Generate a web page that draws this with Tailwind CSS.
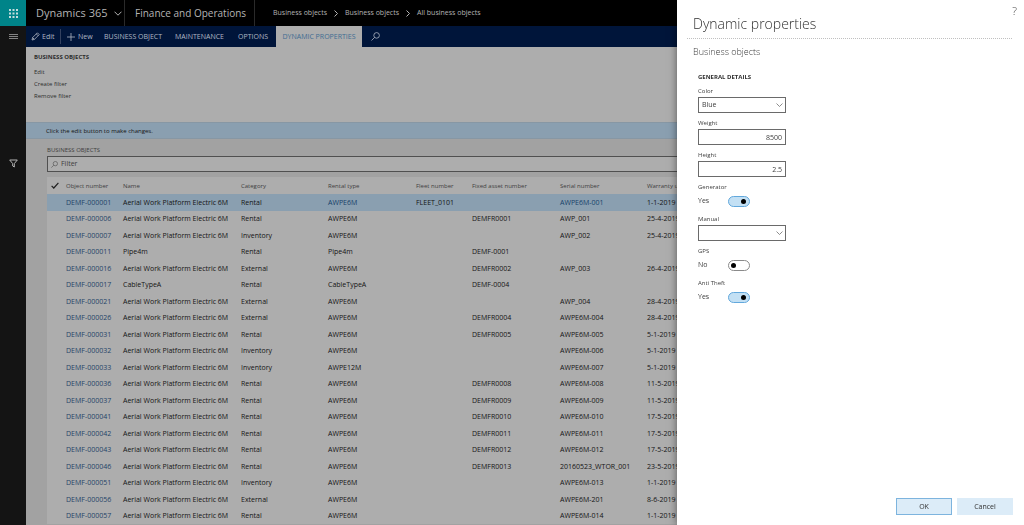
<!DOCTYPE html>
<html lang="en">
<head>
    <meta charset="UTF-8">
    <meta name="viewport" content="width=device-width, initial-scale=1.0">
    <title>All business objects - Finance and Operations</title>
    <script src="https://cdn.jsdelivr.net/npm/@tailwindcss/browser@4"></script>
</head>
<body class="h-screen overflow-hidden bg-[#a8a8a8] font-['Open_Sans','Noto_Sans',sans-serif] text-[7px] leading-[12px] text-[#141414]">
    <div class="flex h-full">
        <nav class="flex w-[26px] shrink-0 flex-col items-center bg-[#141414]">
            <button class="flex h-[26px] w-full items-center justify-center bg-[#008489]" aria-label="App launcher">
                <svg class="size-[9px] fill-[#c4dcdc]" viewBox="0 0 9 9">
                    <path d="M0 0h2v2H0zM3.5 0h2v2h-2zM7 0h2v2H7zM0 3.5h2v2H0zM3.5 3.5h2v2h-2zM7 3.5h2v2H7zM0 7h2v2H0zM3.5 7h2v2h-2zM7 7h2v2H7z"/>
                </svg>
            </button>
            <button class="flex h-[21px] w-full items-center justify-center" aria-label="Expand navigation">
                <svg class="h-[7px] w-[9px] stroke-[#a0a0a0]" viewBox="0 0 9 7"><path d="M0 1.5h9M0 3.5h9M0 5.5h9" stroke-width=".8"/></svg>
            </button>
            <button class="mt-[110px] flex h-3 w-full items-center justify-center" aria-label="Filter pane">
                <svg class="size-[9px] fill-none stroke-[#b4b4b4]" viewBox="0 0 9 9"><path d="M.7 1h7.6L5.3 4.6V8L3.7 7V4.6z"/></svg>
            </button>
        </nav>

        <div class="flex min-w-0 grow flex-col">
            <header class="flex h-[26px] shrink-0 items-center bg-black text-[#b4b4b4]">
                <button class="flex h-full w-[99px] items-center gap-1.5 border-r border-[#2a2a2a] pl-2.5 text-[11px]">
                    Dynamics 365
                    <svg class="h-[5px] w-2 shrink-0 fill-none stroke-current" viewBox="0 0 8 5"><path d="M.5.7 4 4.2 7.5.7"/></svg>
                </button>
                <div class="flex h-full w-[130px] items-center border-r border-[#2a2a2a] pl-2.5 text-[10px]">Finance and Operations</div>
                <nav class="flex items-center gap-[7px] pl-[18px]">
                    <a href="#">Business objects</a>
                    <svg class="h-[7px] w-[4px] fill-none stroke-current" viewBox="0 0 4 7"><path d="M.5.5 3.5 3.5.5 6.5"/></svg>
                    <a href="#">Business objects</a>
                    <svg class="h-[7px] w-[4px] fill-none stroke-current" viewBox="0 0 4 7"><path d="M.5.5 3.5 3.5.5 6.5"/></svg>
                    <a href="#">All business objects</a>
                </nav>
            </header>

            <div class="flex h-[21px] shrink-0 items-center bg-[#00153a] text-[#b0b8c4]">
                <button class="flex h-[15px] w-[35px] items-center gap-0.5 border-r border-[#33415f] pl-[5px]">
                    <svg class="size-[9px] fill-none stroke-current" viewBox="0 0 9 9"><path d="M1 8l.6-2.4L6.4.8 8.2 2.6 3.4 7.4zM5.3 1.9l1.8 1.8M1.6 5.6l1.8 1.8" stroke-width=".8"/></svg>
                    Edit
                </button>
                <button class="flex w-[43px] items-center gap-[3px] pl-[6px]">
                    <svg class="size-[8px] stroke-current" viewBox="0 0 8 8"><path d="M4 0v8M0 4h8" stroke-width=".8"/></svg>
                    New
                </button>
                <button class="w-[71px] text-left">BUSINESS OBJECT</button>
                <button class="w-[63px] text-left">MAINTENANCE</button>
                <button class="w-[38px] text-left">OPTIONS</button>
                <button class="h-full w-[86px] bg-[#adadad] text-[#3d6c92]">DYNAMIC PROPERTIES</button>
                <button class="pl-[9px]" aria-label="Search">
                    <svg class="size-[9px] fill-none stroke-current" viewBox="0 0 9 9"><circle cx="5.6" cy="3.4" r="2.8" stroke-width=".8"/><path d="M3.6 5.4.5 8.5" stroke-width=".8"/></svg>
                </button>
            </div>

            <section class="flex h-[75px] shrink-0 flex-col items-start bg-[#adadad] pt-1 pl-2 text-[6px] text-[#2e2e2e]">
                <h2 class="mb-[3px] font-bold">BUSINESS OBJECTS</h2>
                <button>Edit</button>
                <button>Create filter</button>
                <button>Remove filter</button>
            </section>
            <p class="h-[17px] shrink-0 border-y border-[#8797a4] bg-[#8a9fb0] pl-5 text-[6px] leading-[16px]">Click the edit button to make changes.</p>

            <main class="min-h-0 grow overflow-hidden bg-[#a2a2a2] pt-[5px] pl-[21px]">
                <h2 class="text-[6px] text-[#404040]">BUSINESS OBJECTS</h2>
                <label class="flex h-4 items-center gap-[3px] border border-[#505050] bg-[#adadad] pl-[3px]">
                    <svg class="size-[7px] fill-none stroke-[#505050]" viewBox="0 0 9 9"><circle cx="5.6" cy="3.4" r="2.8" stroke-width=".8"/><path d="M3.6 5.4.5 8.5" stroke-width=".8"/></svg>
                    <input class="grow outline-none placeholder:text-[#404040]" type="text" placeholder="Filter" aria-label="Filter">
                </label>
                <table class="mt-[5px] w-full table-fixed border-collapse bg-[#adadad] text-left whitespace-nowrap">
                    <thead>
                        <tr class="h-[17px] text-[6px] text-[#404040]">
                            <th class="w-[19px] pl-1" aria-label="Select all">
                                <svg class="h-[7px] w-[8px] fill-none stroke-[#202020]" viewBox="0 0 8 7"><path d="M.6 3.8 2.8 6 7.4.8" stroke-width="1.2"/></svg>
                            </th>
                            <th class="w-[57px] font-normal">Object number</th>
                            <th class="w-[118px] font-normal">Name</th>
                            <th class="w-[87px] font-normal">Category</th>
                            <th class="w-[88px] font-normal">Rental type</th>
                            <th class="w-[56px] font-normal">Fleet number</th>
                            <th class="w-[88px] font-normal">Fixed asset number</th>
                            <th class="w-[87px] font-normal">Serial number</th>
                            <th class="font-normal">Warranty until</th>
                        </tr>
                    </thead>
                    <tbody id="objects"></tbody>
                </table>
            </main>
        </div>
    </div>

    <aside class="fixed inset-y-0 right-0 flex w-[347px] flex-col bg-white pl-2.5 text-[#404040] shadow-[0_0_8px_rgba(0,0,0,0.5)]">
        <button class="absolute top-1 right-[7px] text-[11px] leading-[14px] font-light" aria-label="Help">?</button>
        <h1 class="mr-3 h-[39px] border-b border-dotted border-[#c0c0c0] pt-3.5 pl-[6px] text-[14px] leading-[20px] font-light text-[#303030]">Dynamic properties</h1>
        <p class="mt-[6px] pl-[6px] text-[9px] leading-[14px] font-light">Business objects</p>
        <form class="flex grow flex-col pl-[11px]">
            <h2 class="mt-3 text-[6px] font-bold text-[#303030]">GENERAL DETAILS</h2>
            <div class="mt-[3px] grid w-[88px] auto-rows-[32px]">
                <div class="flex flex-col">
                    <label for="color" class="text-[6px] leading-[11px]">Color</label>
                    <div class="relative">
                        <select id="color" class="block h-4 w-full appearance-none border border-[#6a6a6a] pl-[3px] leading-[14px]"><option>Blue</option><option>Red</option></select>
                        <svg class="pointer-events-none absolute top-1.5 right-[3px] h-[4px] w-[7px] fill-none stroke-[#707070]" viewBox="0 0 7 4"><path d="M.5.5l3 3 3-3" stroke-width=".8"/></svg>
                    </div>
                </div>
                <div class="flex flex-col">
                    <label for="weight" class="text-[6px] leading-[11px]">Weight</label>
                    <input id="weight" type="text" value="8500" class="h-4 w-full border border-[#6a6a6a] pr-[3px] text-right">
                </div>
                <div class="flex flex-col">
                    <label for="height" class="text-[6px] leading-[11px]">Height</label>
                    <input id="height" type="text" value="2.5" class="h-4 w-full border border-[#6a6a6a] pr-[3px] text-right">
                </div>
                <div class="flex flex-col">
                    <label for="generator" class="text-[6px] leading-[11px]">Generator</label>
                    <div class="flex h-4 items-center">
                        <span class="w-[30px]">Yes</span>
                        <input id="generator" type="checkbox" checked class="h-[11px] w-[22px] appearance-none rounded-full border border-[#8a8a8a] bg-white p-[2px] before:block before:size-[5px] before:rounded-full before:bg-black checked:border-[#62a8dc] checked:bg-[#c3e0f4] checked:before:ml-[10px]">
                    </div>
                </div>
                <div class="flex flex-col">
                    <label for="manual" class="text-[6px] leading-[11px]">Manual</label>
                    <div class="relative">
                        <select id="manual" class="block h-4 w-full appearance-none border border-[#6a6a6a] pl-[3px] leading-[14px]"><option></option></select>
                        <svg class="pointer-events-none absolute top-1.5 right-[3px] h-[4px] w-[7px] fill-none stroke-[#707070]" viewBox="0 0 7 4"><path d="M.5.5l3 3 3-3" stroke-width=".8"/></svg>
                    </div>
                </div>
                <div class="flex flex-col">
                    <label for="gps" class="text-[6px] leading-[11px]">GPS</label>
                    <div class="flex h-4 items-center">
                        <span class="w-[30px]">No</span>
                        <input id="gps" type="checkbox" class="h-[11px] w-[22px] appearance-none rounded-full border border-[#8a8a8a] bg-white p-[2px] before:block before:size-[5px] before:rounded-full before:bg-black checked:border-[#62a8dc] checked:bg-[#c3e0f4] checked:before:ml-[10px]">
                    </div>
                </div>
                <div class="flex flex-col">
                    <label for="theft" class="text-[6px] leading-[11px]">Anti Theft</label>
                    <div class="flex h-4 items-center">
                        <span class="w-[30px]">Yes</span>
                        <input id="theft" type="checkbox" checked class="h-[11px] w-[22px] appearance-none rounded-full border border-[#8a8a8a] bg-white p-[2px] before:block before:size-[5px] before:rounded-full before:bg-black checked:border-[#62a8dc] checked:bg-[#c3e0f4] checked:before:ml-[10px]">
                    </div>
                </div>
            </div>
            <div class="mt-auto flex justify-end gap-[5px] pr-[11px] pb-2.5">
                <button type="submit" class="h-[17px] w-14 border border-[#7db4de] bg-[#dcecf8] text-[#303030]">OK</button>
                <button type="button" class="h-[17px] w-14 bg-[#dcecf8] text-[#303030]">Cancel</button>
            </div>
        </form>
    </aside>

    <script>
        const AWP = 'Aerial Work Platform Electric 6M';
        // number, name, category, rental type, fleet number, fixed asset, serial, warranty
        const objects = [
            ['000001', AWP, 'Rental', 'AWPE6M', 'FLEET_0101', '', 'AWPE6M-001', '1-1-2019'],
            ['000006', AWP, 'Rental', 'AWPE6M', '', 'DEMFR0001', 'AWP_001', '25-4-2019'],
            ['000007', AWP, 'Inventory', 'AWPE6M', '', '', 'AWP_002', '25-4-2019'],
            ['000011', 'Pipe4m', 'Rental', 'Pipe4m', '', 'DEMF-0001', '', ''],
            ['000016', AWP, 'External', 'AWPE6M', '', 'DEMFR0002', 'AWP_003', '26-4-2019'],
            ['000017', 'CableTypeA', 'Rental', 'CableTypeA', '', 'DEMF-0004', '', ''],
            ['000021', AWP, 'External', 'AWPE6M', '', '', 'AWP_004', '28-4-2019'],
            ['000026', AWP, 'External', 'AWPE6M', '', 'DEMFR0004', 'AWPE6M-004', '28-4-2019'],
            ['000031', AWP, 'Rental', 'AWPE6M', '', 'DEMFR0005', 'AWPE6M-005', '5-1-2019'],
            ['000032', AWP, 'Inventory', 'AWPE6M', '', '', 'AWPE6M-006', '5-1-2019'],
            ['000033', AWP, 'Inventory', 'AWPE12M', '', '', 'AWPE6M-007', '5-1-2019'],
            ['000036', AWP, 'Rental', 'AWPE6M', '', 'DEMFR0008', 'AWPE6M-008', '11-5-2019'],
            ['000037', AWP, 'Rental', 'AWPE6M', '', 'DEMFR0009', 'AWPE6M-009', '11-5-2019'],
            ['000041', AWP, 'Rental', 'AWPE6M', '', 'DEMFR0010', 'AWPE6M-010', '17-5-2019'],
            ['000042', AWP, 'Rental', 'AWPE6M', '', 'DEMFR0011', 'AWPE6M-011', '17-5-2019'],
            ['000043', AWP, 'Rental', 'AWPE6M', '', 'DEMFR0012', 'AWPE6M-012', '17-5-2019'],
            ['000046', AWP, 'Rental', 'AWPE6M', '', 'DEMFR0013', '20160523_WTOR_001', '23-5-2019'],
            ['000051', AWP, 'Inventory', 'AWPE6M', '', '', 'AWPE6M-013', '1-1-2019'],
            ['000056', AWP, 'External', 'AWPE6M', '', '', 'AWPE6M-201', '8-6-2019'],
            ['000057', AWP, 'Rental', 'AWPE6M', '', '', 'AWPE6M-014', '1-1-2019'],
        ];

        document.getElementById('objects').innerHTML = objects.map(([number, ...rest], i) => {
            const cells = rest.map((text, col) => {
                const link = i === 0 && (col === 2 || col === 5);
                return `<td>${link ? `<a href="#" class="text-[#17426a]">${text}</a>` : text}</td>`;
            }).join('');
            return `<tr class="odd:h-[17px] even:h-4 ${i === 0 ? 'bg-[#8a9fb0]' : ''}"><td></td><td><a href="#" class="text-[#1f4468]">DEMF-${number}</a></td>${cells}</tr>`;
        }).join('');
    </script>
</body>
</html>
